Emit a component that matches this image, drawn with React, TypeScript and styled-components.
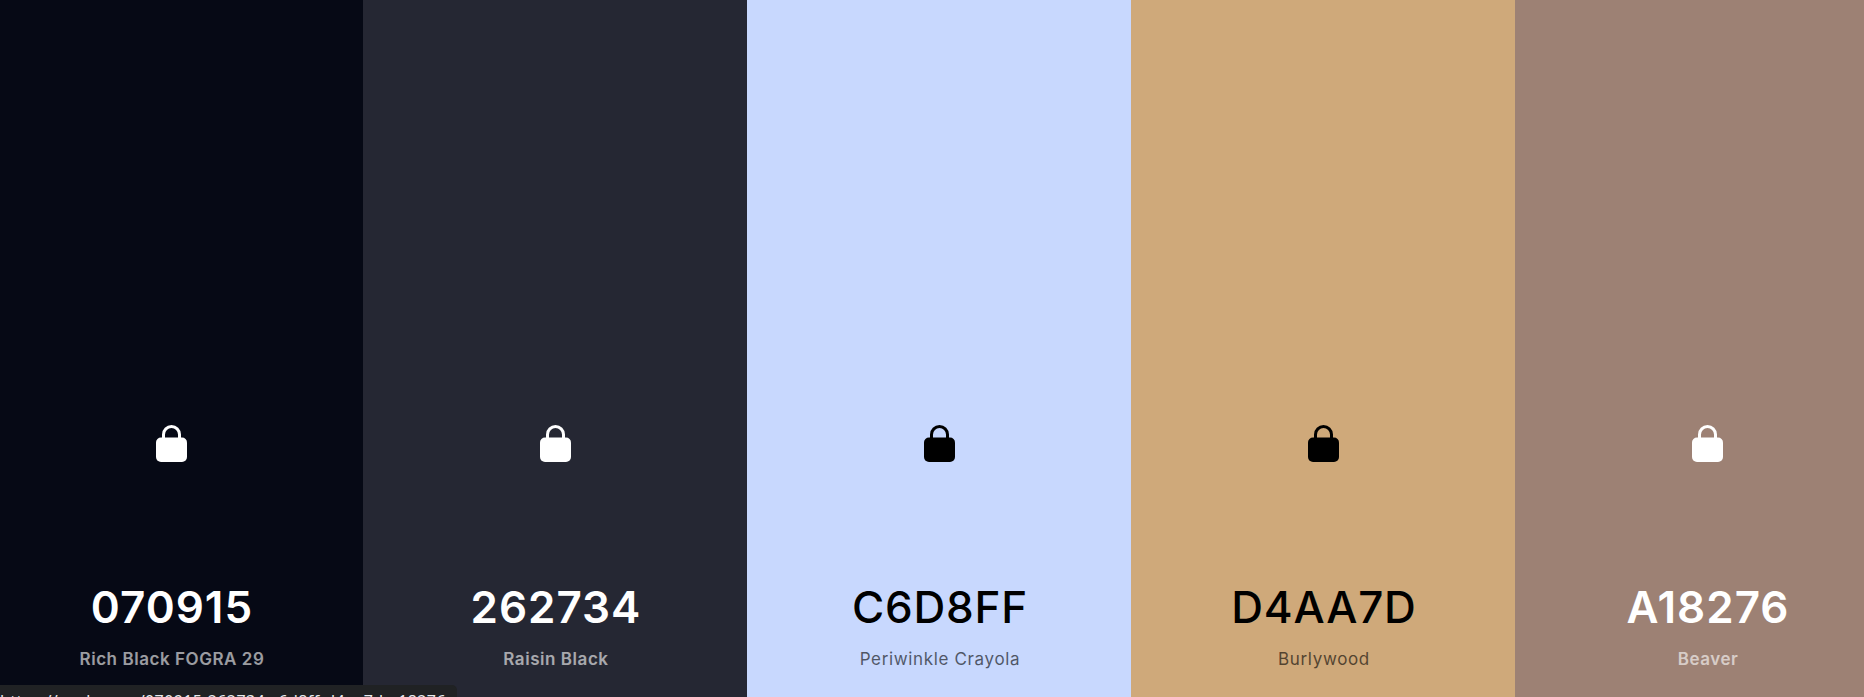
import React from "react";
import styled, { createGlobalStyle } from "styled-components";

const GlobalStyle = createGlobalStyle`
  html, body {
    margin: 0;
    padding: 0;
    height: 100%;
    overflow: hidden;
    background: #060915;
  }
  #root {
    height: 100%;
  }
`;

interface Swatch {
  hex: string;
  name: string;
  bg: string;
  light: boolean;
}

const swatches: Swatch[] = [
  { hex: "070915", name: "Rich Black FOGRA 29", bg: "#060915", light: false },
  { hex: "262734", name: "Raisin Black", bg: "#252733", light: false },
  { hex: "C6D8FF", name: "Periwinkle Crayola", bg: "#c8d8fe", light: true },
  { hex: "D4AA7D", name: "Burlywood", bg: "#cfa97a", light: true },
  { hex: "A18276", name: "Beaver", bg: "#9d8174", light: false },
];

const Palette = styled.div`
  display: flex;
  width: 1920px;
  height: 100%;
  margin-left: -21.33px;
  font-family: Inter, "Liberation Sans", sans-serif;
`;

const Column = styled.div<{ $bg: string; $light: boolean }>`
  flex: 1;
  display: flex;
  flex-direction: column;
  align-items: center;
  padding: 425px 0 0 2.6px;
  background: ${(p) => p.$bg};
  color: ${(p) => (p.$light ? "#000" : "#fff")};
`;

const LockIcon = styled.svg`
  width: 31px;
  height: 37px;
  fill: currentColor;
`;

const Hex = styled.div<{ $light: boolean }>`
  margin-top: 118px;
  font-size: 44px;
  line-height: 54px;
  font-weight: ${(p) => (p.$light ? 500 : 600)};
  letter-spacing: ${(p) => (p.$light ? "0.8px" : "1px")};
`;

const Name = styled.div<{ $light: boolean }>`
  margin-top: 15px;
  font-size: 17px;
  line-height: 20px;
  font-weight: ${(p) => (p.$light ? 400 : 600)};
  letter-spacing: ${(p) => (p.$light ? "0.65px" : "0.55px")};
  opacity: 0.6;
`;

const StatusBubble = styled.div`
  position: absolute;
  left: 0;
  bottom: 0;
  width: 456.5px;
  height: 6.5px;
  padding-top: 6px;
  overflow: hidden;
  background: #202224;
  border-top-right-radius: 5px;
  color: #e8eaed;
  font-family: "Noto Sans", sans-serif;
  font-size: 16px;
  letter-spacing: 0.38px;
  line-height: 20px;
  white-space: nowrap;
`;

const Lock = () => (
  <LockIcon viewBox="0 0 31 37">
    <path
      d="M7.5 15V9.5a8 8 0 0 1 16 0V15"
      fill="none"
      stroke="currentColor"
      strokeWidth="3"
    />
    <rect x="0" y="12.5" width="31" height="24.5" rx="5" />
  </LockIcon>
);

export default function App() {
  return (
    <>
      <GlobalStyle />
      <Palette>
        {swatches.map((s) => (
          <Column key={s.hex} $bg={s.bg} $light={s.light}>
            <Lock />
            <Hex $light={s.light}>{s.hex}</Hex>
            <Name $light={s.light}>{s.name}</Name>
          </Column>
        ))}
      </Palette>
      <StatusBubble>https://coolors.co/070915-262734-c6d8ff-d4aa7d-a18276</StatusBubble>
    </>
  );
}
